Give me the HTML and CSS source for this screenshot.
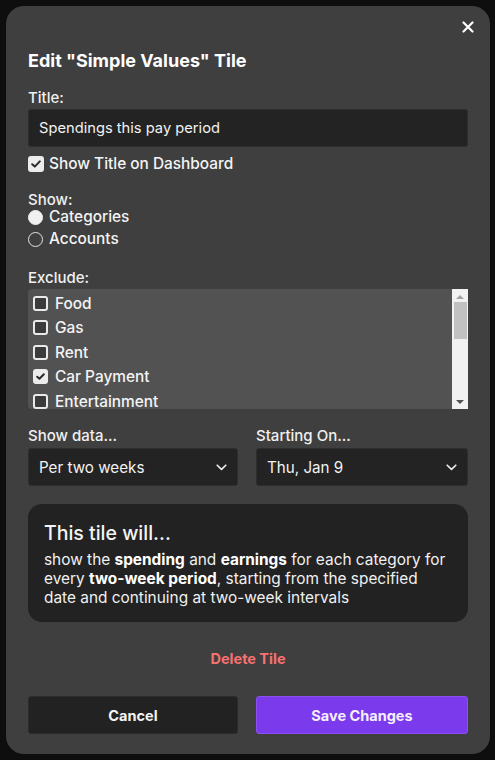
FILE: index.html
```html
<!DOCTYPE html>
<html>
<head>
<meta charset="utf-8">
<link rel="stylesheet" href="styles.css">
</head>
<body>
<div class="modal">
  <div class="close-row">
    <svg class="close" width="12" height="12" viewBox="0 0 12 12"><path d="M1.5 1.5 L10.5 10.5 M10.5 1.5 L1.5 10.5" stroke="#fff" stroke-width="2.2" stroke-linecap="round"/></svg>
  </div>
  <h1 class="heading">Edit "Simple Values" Tile</h1>

  <div class="label title-label">Title:</div>
  <div class="input">Spendings this pay period</div>
  <div class="check-row">
    <span class="cb cb-on"><svg width="10" height="8" viewBox="0 0 10 8"><path d="M1.2 4.2 L3.8 6.6 L8.8 1.4" fill="none" stroke="#2a2a2a" stroke-width="2" stroke-linecap="round" stroke-linejoin="round"/></svg></span>
    <span class="check-text">Show Title on Dashboard</span>
  </div>

  <div class="label show-label">Show:</div>
  <div class="radio-row"><span class="radio radio-on"></span><span class="check-text">Categories</span></div>
  <div class="radio-row"><span class="radio"></span><span class="check-text">Accounts</span></div>

  <div class="label exclude-label">Exclude:</div>
  <div class="list">
    <div class="list-items">
      <div class="item"><span class="cb small"></span>Food</div>
      <div class="item"><span class="cb small"></span>Gas</div>
      <div class="item"><span class="cb small"></span>Rent</div>
      <div class="item"><span class="cb small cb-on"><svg width="9" height="7" viewBox="0 0 10 8"><path d="M1.2 4.2 L3.8 6.6 L8.8 1.4" fill="none" stroke="#2a2a2a" stroke-width="2.2" stroke-linecap="round" stroke-linejoin="round"/></svg></span>Car Payment</div>
      <div class="item"><span class="cb small"></span>Entertainment</div>
    </div>
    <div class="scrollbar">
      <span class="arrow up"></span>
      <span class="thumb"></span>
      <span class="track"></span>
      <span class="arrow down"></span>
    </div>
  </div>

  <div class="selects">
    <div class="field">
      <div class="label">Show data...</div>
      <div class="select"><span>Per two weeks</span><svg width="11" height="7" viewBox="0 0 11 7"><path d="M1.2 1.2 L5.5 5.4 L9.8 1.2" fill="none" stroke="#eee" stroke-width="1.6" stroke-linecap="round" stroke-linejoin="round"/></svg></div>
    </div>
    <div class="field">
      <div class="label">Starting On...</div>
      <div class="select"><span>Thu, Jan 9</span><svg width="11" height="7" viewBox="0 0 11 7"><path d="M1.2 1.2 L5.5 5.4 L9.8 1.2" fill="none" stroke="#eee" stroke-width="1.6" stroke-linecap="round" stroke-linejoin="round"/></svg></div>
    </div>
  </div>

  <div class="info">
    <div class="info-title">This tile will...</div>
    <p class="info-text">show the <b>spending</b> and <b>earnings</b> for each category for every <b>two-week period</b>, starting from the specified date and continuing at two-week intervals</p>
  </div>

  <div class="delete">Delete Tile</div>

  <div class="buttons">
    <div class="btn cancel">Cancel</div>
    <div class="btn save">Save Changes</div>
  </div>
</div>
</body>
</html>
```
FILE: styles.css
```css
* { box-sizing: border-box; }
html, body { margin: 0; padding: 0; }
body {
  background: #0e0e0e;
  font-family: Inter, "Noto Sans", sans-serif;
  color: #f2f2f2;
  width: 495px;
  height: 760px;
  overflow: hidden;
}
.modal {
  margin: 6px 5px 0 6px;
  width: 484px;
  height: 748px;
  background: #3f3f3f;
  border-radius: 18px;
  padding: 0 22px;
  display: flex;
  flex-direction: column;
}
.close-row {
  display: flex;
  justify-content: flex-end;
  padding-top: 15px;
  margin-right: -6px;
  height: 33px;
}
.close { display: block; }
.heading {
  margin: 10px 0 0;
  font-size: 18px;
  line-height: 24px;
  font-weight: 700;
  color: #fff;
}
.label {
  font-size: 15px;
  line-height: 20px;
  font-weight: 500;
  color: #f0f0f0;
}
.title-label { margin-top: 15px; }
.input {
  margin-top: 1px;
  height: 38px;
  background: #232323;
  border: 1px solid #2e2e2e;
  border-radius: 3px;
  padding: 0 10px;
  font-size: 14.7px;
  display: flex;
  align-items: center;
  color: #f2f2f2;
}
.check-row {
  margin-top: 7px;
  display: flex;
  align-items: center;
  gap: 5px;
  height: 19px;
}
.check-text {
  font-size: 15.4px;
  font-weight: 500;
  line-height: 16px;
  color: #f4f4f4;
}
.cb {
  width: 16px;
  height: 16px;
  border-radius: 3px;
  border: 2px solid #e9e9e9;
  background: #3b3b3b;
  display: inline-flex;
  align-items: center;
  justify-content: center;
  flex: none;
}
.cb-on { background: #ececec; border-color: #ececec; }
.show-label { margin-top: 19px; line-height: 16px; }
.radio-row {
  display: flex;
  align-items: center;
  gap: 6px;
  height: 16px;
  margin-top: 1px;
}
.radio-row + .radio-row { margin-top: 6px; }
.radio {
  width: 15px;
  height: 15px;
  border-radius: 50%;
  border: 1.5px solid #e4e4e4;
  flex: none;
}
.radio-on { background: #f0f0f0; border-color: #f0f0f0; }
.exclude-label { margin-top: 21px; }
.list {
  margin-top: 1px;
  height: 120px;
  background: #525252;
  border-radius: 4px 0 0 4px;
  display: flex;
  overflow: hidden;
}
.list-items {
  flex: 1;
  padding: 2px 5px 0;
}
.item {
  display: flex;
  align-items: center;
  gap: 7px;
  height: 24.5px;
  font-size: 15.4px;
  font-weight: 500;
  color: #f4f4f4;
}
.cb.small { width: 15px; height: 15px; border-radius: 3px; }
.scrollbar {
  width: 16px;
  background: #f1f1f1;
  display: flex;
  flex-direction: column;
  align-items: center;
}
.arrow {
  width: 0; height: 0;
  border-left: 4px solid transparent;
  border-right: 4px solid transparent;
}
.arrow.up { border-bottom: 4px solid #a3a3a3; margin: 6px 0 3px; }
.arrow.down { border-top: 4px solid #505050; margin: 3px 0 5px; }
.thumb {
  width: 13px;
  height: 37px;
  background: #c1c1c1;
}
.track { flex: 1; }
.selects {
  margin-top: 17px;
  display: flex;
  gap: 18px;
}
.field { flex: 1; display: flex; flex-direction: column; }
.field:first-child { flex: 0 0 210px; }
.select {
  margin-top: 2px;
  height: 38px;
  background: #232323;
  border: 1px solid #2e2e2e;
  border-radius: 3px;
  padding: 0 10px 0 10px;
  display: flex;
  align-items: center;
  justify-content: space-between;
  font-size: 15.2px;
  color: #f2f2f2;
}
.info {
  margin-top: 18px;
  background: #222222;
  border-radius: 14px;
  padding: 17px 16px 0 16px;
  height: 118px;
}
.info-title {
  font-size: 19.5px;
  line-height: 24px;
  font-weight: 500;
  color: #f4f4f4;
}
.info-text {
  margin: 4.5px 0 0;
  font-size: 15.4px;
  line-height: 19px;
  color: #f0f0f0;
}
.info-text b { font-weight: 700; color: #fff; }
.delete {
  margin-top: 27px;
  text-align: center;
  color: #f87171;
  font-size: 14.5px;
  font-weight: 700;
  line-height: 20px;
}
.buttons {
  margin-top: 27px;
  display: flex;
  gap: 18px;
}
.btn {
  height: 38px;
  display: flex;
  align-items: center;
  justify-content: center;
  font-size: 14.5px;
  font-weight: 700;
  border-radius: 3px;
}
.cancel { flex: 0 0 210px; background: #222222; border: 1px solid #2c2c2c; color: #f4f4f4; }
.save { flex: 1; background: #7c3aed; border: 1px solid #8b50f0; color: #f4f0ff; }
```
